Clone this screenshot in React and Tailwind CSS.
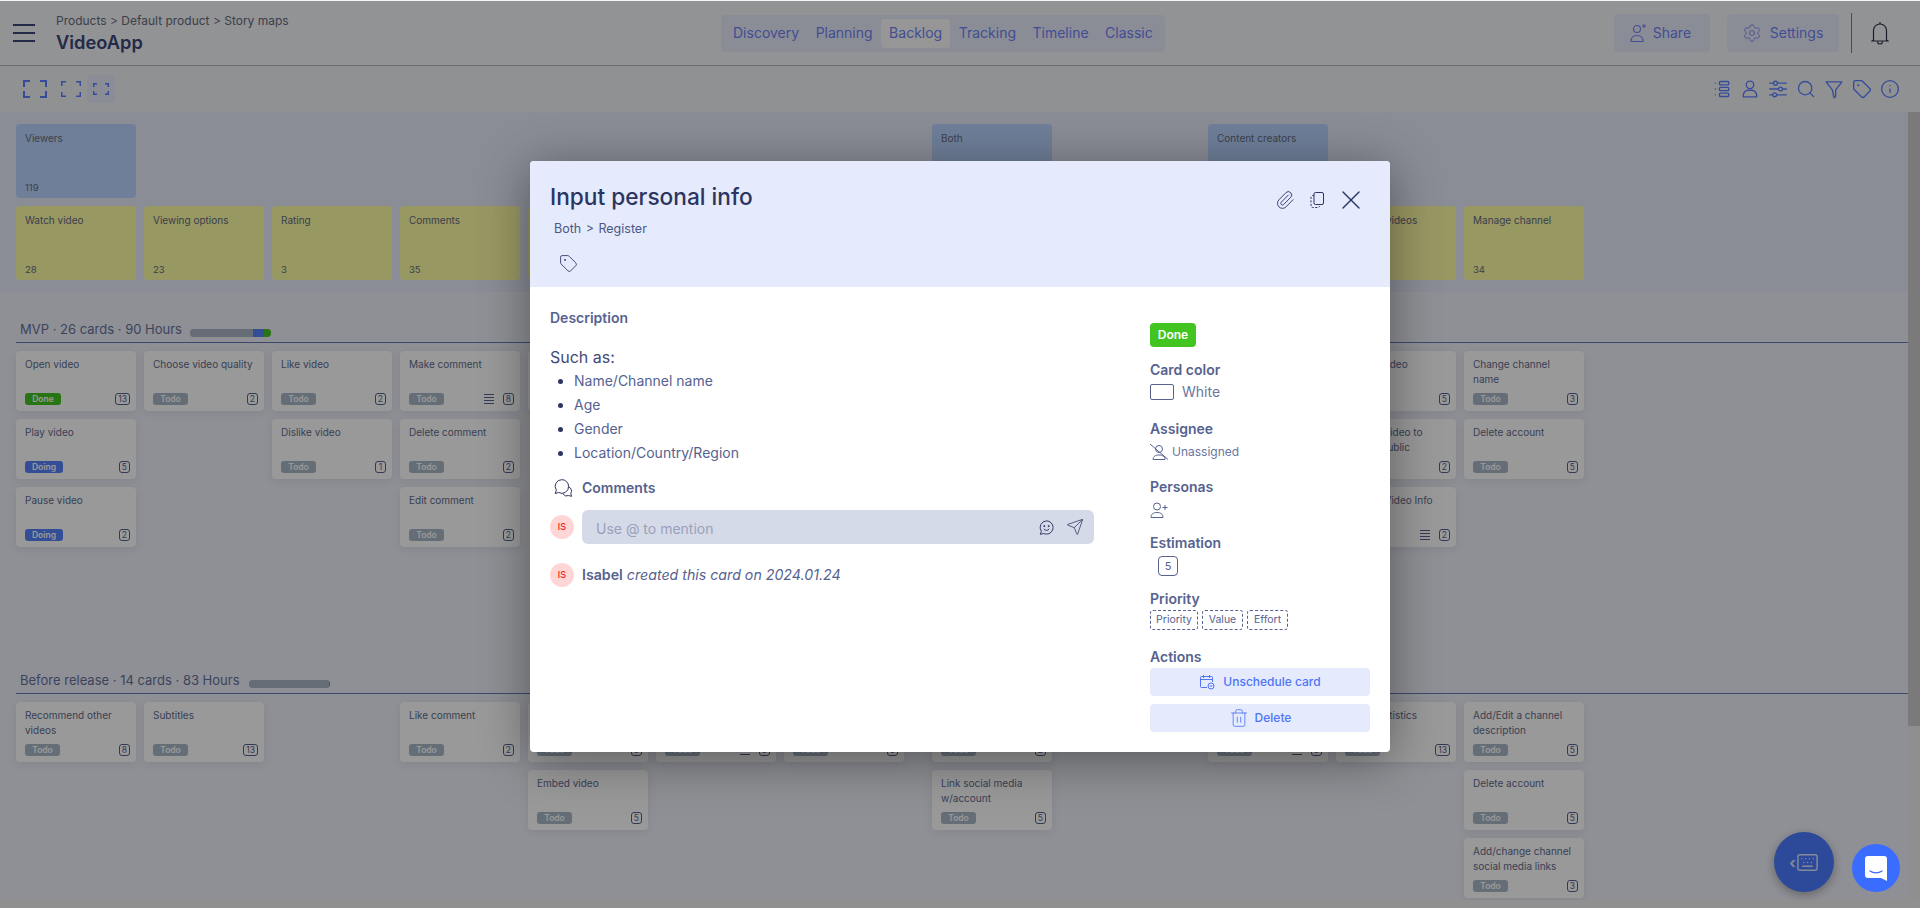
import { Info, Keyboard, Paperclip, Search, Send, Settings, Tag, Trash2, X } from 'lucide-react';

const mvp = [
  [
    [
      { t: 'Open video', s: 'Done', n: 13 },
      { t: 'Play video', s: 'Doing', n: 5 },
      { t: 'Pause video', s: 'Doing', n: 2 },
    ],
    [{ t: 'Choose video quality', s: 'Todo', n: 2 }],
    [
      { t: 'Like video', s: 'Todo', n: 2 },
      { t: 'Dislike video', s: 'Todo', n: 1 },
    ],
    [
      { t: 'Make comment', s: 'Todo', n: 8, lines: true },
      { t: 'Delete comment', s: 'Todo', n: 2 },
      { t: 'Edit comment', s: 'Todo', n: 2 },
    ],
    [{ t: 'Reply to comment', s: 'Todo', n: 3 }],
    [],
    [],
  ],
  [[{ t: 'Input personal info', s: 'Done', n: 5 }], []],
  [
    [],
    [
      { t: 'Upload video', s: 'Todo', n: 5 },
      { t: 'Change video to private/public', s: 'Todo', n: 2 },
      { t: 'Change Video Info', s: 'Todo', n: 2, lines: true },
    ],
    [
      { t: 'Change channel name', s: 'Todo', n: 3 },
      { t: 'Delete account', s: 'Todo', n: 5 },
    ],
  ],
];

const beforeRelease = [
  [
    [{ t: 'Recommend other videos', s: 'Todo', n: 8 }],
    [{ t: 'Subtitles', s: 'Todo', n: 13 }],
    [],
    [{ t: 'Like comment', s: 'Todo', n: 2 }],
    [
      { t: 'Share video', s: 'Todo', n: 3 },
      { t: 'Embed video', s: 'Todo', n: 5 },
    ],
    [{ t: 'Report video', s: 'Todo', n: 3, lines: true }],
    [{ t: 'Search videos', s: 'Todo', n: 5 }],
  ],
  [
    [
      { t: 'Edit profile', s: 'Todo', n: 2 },
      { t: 'Link social media w/account', s: 'Todo', n: 5 },
    ],
    [],
  ],
  [
    [{ t: 'Schedule video', s: 'Todo', n: 3, lines: true }],
    [{ t: 'Video statistics', s: 'Todo', n: 13 }],
    [
      { t: 'Add/Edit a channel description', s: 'Todo', n: 5 },
      { t: 'Delete account', s: 'Todo', n: 5 },
      { t: 'Add/change channel social media links', s: 'Todo', n: 3 },
    ],
  ],
];

const activities = [
  ['Watch video', 28],
  ['Viewing options', 23],
  ['Rating', 3],
  ['Comments', 35],
  ['Share', 6],
  ['Search', 9],
  ['Explore', 15],
  ['Register', 8],
  ['Profile', 4],
  ['Upload', 12],
  ['Manage videos', 21],
  ['Manage channel', 34],
];

const statusStyles = {
  Done: 'bg-[#42c421] w-9',
  Doing: 'bg-[#5683fb] w-[38px]',
  Todo: 'bg-[#a9b6c6] w-[35px]',
};

function Corners({ w, h, len, sw }) {
  return (
    <svg width={w} height={h} viewBox={`0 0 ${w} ${h}`} fill="none" stroke="#5a7fff" strokeWidth={sw}>
      <path d={`M${sw / 2} ${len}V${sw / 2}H${len}`} />
      <path d={`M${w - len} ${sw / 2}H${w - sw / 2}V${len}`} />
      <path d={`M${sw / 2} ${h - len}V${h - sw / 2}H${len}`} />
      <path d={`M${w - len} ${h - sw / 2}H${w - sw / 2}V${h - len}`} />
    </svg>
  );
}

function TabItem({ label, active }) {
  return (
    <div className={`flex h-[29px] items-center rounded px-2 text-sm ${active ? 'bg-[#fafafa]' : ''}`}>{label}</div>
  );
}

function BarIcon({ children }) {
  return (
    <svg width="20" height="20" viewBox="0 0 24 24" fill="none" stroke="#5a7fff" strokeWidth="1.6" strokeLinecap="round" strokeLinejoin="round">
      {children}
    </svg>
  );
}

function StoryCard({ card }) {
  return (
    <div className="flex h-[60px] w-[120px] flex-col justify-between rounded bg-white pl-[9px] pr-[6px] pt-[6px] pb-[6px] shadow-[0_2px_8px_rgba(90,100,140,0.12)]">
      <div className="text-[10px] leading-[15px] text-[#626b8c]">{card.t}</div>
      <div className="flex items-center justify-between">
        <span className={`flex h-3 items-center justify-center rounded-[3px] text-[8.5px] font-semibold text-white ${statusStyles[card.s]}`}>
          {card.s}
        </span>
        <div className="flex items-center gap-[9px]">
          {card.lines && (
            <div className="flex w-[10px] flex-col gap-[2px]">
              <div className="h-px bg-[#56628f]" />
              <div className="h-px bg-[#56628f]" />
              <div className="h-px bg-[#56628f]" />
              <div className="h-px bg-[#56628f]" />
            </div>
          )}
          <span className="flex h-3 min-w-[11px] items-center justify-center rounded-[3px] border border-[#56628f] px-[2px] text-[8.5px] text-[#56628f]">
            {card.n}
          </span>
        </div>
      </div>
    </div>
  );
}

function Lane({ groups }) {
  return (
    <div className="flex gap-7 pl-4 pt-2">
      {groups.map((group, g) => (
        <div key={g} className="flex gap-2">
          {group.map((col, c) => (
            <div key={c} className="flex w-[120px] flex-col gap-2">
              {col.map((card) => (
                <StoryCard key={card.t} card={card} />
              ))}
            </div>
          ))}
        </div>
      ))}
    </div>
  );
}

function BandCard({ title, count, color }) {
  return (
    <div className={`flex h-[74px] w-[120px] flex-col justify-between rounded pl-[9px] pt-[7px] pb-[3px] text-[#656a7e] ${color}`}>
      <div className="text-[10px] leading-[15px]">{title}</div>
      <div className="text-[9.5px] leading-[14px]">{count}</div>
    </div>
  );
}

function ReleaseHeader({ title, start, bar }) {
  return (
    <div className="ml-4 flex h-[51px] items-end border-b border-[#6478b8] pb-[3px]">
      <span className="ml-1 text-[13px] leading-[20px] text-[#66719c]">{title}</span>
      <div className={`mb-[2px] flex h-2 w-[81px] overflow-hidden rounded-full bg-[#aab6c6] ${start}`}>{bar}</div>
    </div>
  );
}

function Avatar() {
  return (
    <div className="flex h-6 w-6 shrink-0 items-center justify-center rounded-full bg-[#ffd6d6] text-[9px] font-medium text-[#f01d1d]">
      IS
    </div>
  );
}

function SideLabel({ className, children }) {
  return <div className={`text-sm font-semibold leading-5 text-[#56628f] ${className}`}>{children}</div>;
}

function ChanceChip({ label, width }) {
  return (
    <span className={`flex h-5 items-center justify-center rounded-[3px] border border-dashed border-[#56628f] text-[10.5px] text-[#56628f] ${width}`}>
      {label}
    </span>
  );
}

function Modal() {
  return (
    <div className="absolute left-[530px] top-[161px] flex h-[591px] w-[860px] flex-col overflow-hidden rounded bg-white shadow-[0_8px_50px_rgba(0,0,0,0.4)]">
      <div className="flex h-[126px] shrink-0 justify-between bg-[#e5eafd] pl-5 pr-[23px] pt-5">
        <div>
          <h2 className="text-[22.7px] font-medium leading-8 text-[#2b3560]">Input personal info</h2>
          <div className="ml-1 mt-[7px] text-[12.5px] leading-[18px] text-[#4c5884] [word-spacing:1px]">Both &gt; Register</div>
          <Tag size={19} strokeWidth={1.1} color="#2b3560" className="ml-[9px] mt-[16px]" />
        </div>
        <div className="flex h-[38px] items-center">
          <Paperclip size={20} strokeWidth={1.1} color="#2b3560" />
          <svg className="ml-[13px]" width="18" height="18" viewBox="0 0 18 18" fill="none" stroke="#2b3560" strokeWidth="1">
            <rect x="6" y="1.5" width="9.5" height="12" rx="1.5" />
            <path d="M6 4.5H4.5A1.5 1.5 0 0 0 3 6v9a1.5 1.5 0 0 0 1.5 1.5H10a1.5 1.5 0 0 0 1.5-1.5" strokeDasharray="2 1.5" />
          </svg>
          <X className="ml-[9px]" size={32} strokeWidth={1} color="#2b3560" />
        </div>
      </div>
      <div className="flex flex-1 pl-5">
        <div className="w-[544px] pt-[21px]">
          <div className="text-sm font-semibold leading-5 text-[#56628f]">Description</div>
          <div className="mt-[17px] text-base leading-6 text-[#3f4a75]">Such as:</div>
          <ul className="list-disc pl-6 text-sm leading-6 text-[#56628f] marker:text-[#2b3560]">
            <li>Name/Channel name</li>
            <li>Age</li>
            <li>Gender</li>
            <li>Location/Country/Region</li>
          </ul>
          <div className="mt-[13px] flex h-5 items-center">
            <svg className="ml-[3px]" width="20" height="20" viewBox="0 0 18 18" fill="none" stroke="#2b3560" strokeWidth=".9">
              <path d="M8 1.5a6 6 0 0 0-5 9.4L2 14l3-1a6 6 0 0 0 9-5.5 6 6 0 0 0-6-6z" />
              <path d="M14 8a4 4 0 0 1 2 6l.7 2.5L14 15.800a4 4 0 0 1-5-1.500" />
            </svg>
            <span className="ml-[9px] text-sm font-semibold text-[#56628f]">Comments</span>
          </div>
          <div className="mt-3 flex items-center gap-2">
            <Avatar />
            <div className="flex h-[34px] flex-1 items-center justify-between rounded-md bg-[#d5dae8] pl-[14px] pr-[10px]">
              <span className="pt-[3px] text-sm text-[#9aa1bb]">Use @ to mention</span>
              <div className="flex items-center gap-[11px]">
                <svg width="17" height="17" viewBox="0 0 18 18" fill="none" stroke="#2b3560" strokeWidth="1">
                  <path d="M9 2a7 7 0 0 1 0 14 7 7 0 0 1-3-.7L2.500 16.300l1-3.300A7 7 0 0 1 9 2z" />
                  <path d="M6 10.500c1.500 2 4.500 2 6 0" />
                  <circle cx="6.700" cy="7.500" r=".6" fill="#2b3560" />
                  <circle cx="11.300" cy="7.500" r=".6" fill="#2b3560" />
                </svg>
                <Send size={18} strokeWidth={1} color="#2b3560" />
              </div>
            </div>
          </div>
          <div className="mt-[19px] flex items-center gap-2 text-[14.2px] text-[#56628f]">
            <Avatar />
            <span>
              <b className="font-semibold">Isabel</b> <i>created this card on 2024.01.24</i>
            </span>
          </div>
        </div>
        <div className="ml-14 w-[220px] pt-9">
          <span className="flex h-6 w-[46px] items-center justify-center rounded bg-[#42c421] text-xs font-semibold text-white">Done</span>
          <SideLabel className="mt-[13px]">Card color</SideLabel>
          <div className="mt-1 flex h-4 items-center text-sm text-[#6a76a0]">
            <div className="h-4 w-6 rounded-[2px] border border-[#56628f]" />
            <span className="ml-2">White</span>
          </div>
          <SideLabel className="mt-[19px]">Assignee</SideLabel>
          <div className="mt-1 flex h-[18px] items-center text-xs text-[#6a76a0]">
            <svg width="18" height="16" viewBox="0 0 18 16" fill="none" stroke="#56628f" strokeWidth="1">
              <circle cx="9" cy="5" r="3.500" />
              <path d="M3 15.500c0-3 2.500-4.500 6-4.500s6 1.500 6 4.500z" />
              <path d="M0 0l18 15.500" />
            </svg>
            <span className="ml-1">Unassigned</span>
          </div>
          <SideLabel className="mt-4">Personas</SideLabel>
          <svg className="mt-[5px]" width="18" height="16" viewBox="0 0 18 16" fill="none" stroke="#56628f" strokeWidth="1">
            <circle cx="7" cy="4.500" r="3.500" />
            <path d="M1 15.500c0-3.500 2.500-5 6-5s6 1.500 6 5z" />
            <path d="M15 3v5M12.500 5.500h5" />
          </svg>
          <SideLabel className="mt-[15px]">Estimation</SideLabel>
          <div className="ml-2 mt-[3px] flex h-5 w-5 items-center justify-center rounded border border-[#56628f] text-[11px] text-[#56628f]">5</div>
          <SideLabel className="mt-[13px]">Priority</SideLabel>
          <div className="mt-px flex gap-1">
            <ChanceChip label="Priority" width="w-12" />
            <ChanceChip label="Value" width="w-[41px]" />
            <ChanceChip label="Effort" width="w-[41px]" />
          </div>
          <SideLabel className="mt-[17px]">Actions</SideLabel>
          <div className="mt-px flex h-7 items-center justify-center gap-2 rounded bg-[#e5eafd] text-xs font-medium text-[#4f75f5]">
            <svg width="16" height="16" viewBox="0 0 16 16" fill="none" stroke="#4f75f5" strokeWidth="1">
              <path d="M8 13.500H2.500a1 1 0 0 1-1-1v-9a1 1 0 0 1 1-1h10a1 1 0 0 1 1 1V8M1.500 5.500h12M4.500 1v3M10.500 1v3" />
              <circle cx="12" cy="12" r="3" />
              <path d="M10.500 12h3" />
            </svg>
            Unschedule card
          </div>
          <div className="mt-2 flex h-7 items-center justify-center gap-[6px] rounded bg-[#e5eafd] text-xs font-medium text-[#4f75f5]">
            <Trash2 size={20} strokeWidth={1} />
            <span>Delete</span>
          </div>
        </div>
      </div>
    </div>
  );
}

export default function App() {
  return (
    <div className="relative h-[908px] w-full overflow-hidden bg-[#f3f5f8] font-['Inter',sans-serif]">
      <header className="flex h-[66px] items-center border-b border-[#b5b8be] bg-[#f3f5f8] pt-px">
        <div className="ml-[13px] flex w-[22px] flex-col gap-[6px]">
          <div className="h-[2px] bg-[#3a4778]" />
          <div className="h-[2px] bg-[#3a4778]" />
          <div className="h-[2px] bg-[#3a4778]" />
        </div>
        <div className="ml-[21px] w-[665px]">
          <div className="text-[12px] leading-4 text-[#666a7c]">Products &gt; Default product &gt; Story maps</div>
          <div className="mt-px text-[18.25px] font-semibold leading-6 text-[#3a4778]">VideoApp</div>
        </div>
        <nav className="flex h-[37px] items-center gap-[0.5px] rounded bg-[#e8ebfb] px-1 text-[#6f82f5]">
          <TabItem label="Discovery" />
          <TabItem label="Planning" />
          <TabItem label="Backlog" active />
          <TabItem label="Tracking" />
          <TabItem label="Timeline" />
          <TabItem label="Classic" />
        </nav>
        <div className="ml-[449px] flex h-[38px] w-24 items-center gap-[6px] rounded bg-[#e8ebfb] pl-[15px] text-sm text-[#6f82f5]">
          <svg width="18" height="20" viewBox="0 0 18 20" fill="none" stroke="#6f82f5" strokeWidth="1.100">
            <circle cx="8" cy="6" r="3.500" />
            <path d="M2 18.500c0-4 2.500-6 6-6s6 2 6 6z" />
            <path d="M15 1v4M13 3h4" />
          </svg>
          Share
        </div>
        <div className="ml-[17px] flex h-[38px] w-[112px] items-center gap-2 rounded bg-[#e8ebfb] pl-[15px] text-sm text-[#6f82f5]">
          <Settings size={20} strokeWidth={1} />
          Settings
        </div>
        <div className="ml-3 h-10 w-px bg-[#7b7e85]" />
        <svg className="ml-[19px]" width="18" height="24" viewBox="0 0 18 24" fill="none" stroke="#2f3547" strokeWidth="1.200">
          <path d="M9 3a6.500 6.500 0 0 0-6.500 6.500V19l-1.500 1h16l-1.500-1V9.500A6.500 6.500 0 0 0 9 3z" />
          <path d="M9 3V1M6.500 20.500a2.500 2.500 0 0 0 5 0" />
        </svg>
      </header>

      <div className="flex h-[46px] items-center justify-between bg-[#f1f2f5] pl-[23px] pr-5">
        <div className="flex items-center">
          <Corners w={24} h={18} len={7} sw={2} />
          <div className="ml-[14px]">
            <Corners w={20} h={16} len={5} sw={1.500} />
          </div>
          <div className="ml-[6px] flex h-7 w-7 items-center justify-center rounded bg-[#e8ebfb]">
            <Corners w={16} h={12} len={4} sw={1.500} />
          </div>
        </div>
        <div className="flex items-center gap-2">
          <BarIcon>
            <path d="M4 5h.01M4 12h.01M4 19h.01" />
            <rect x="9" y="3" width="11" height="4" rx="1" />
            <rect x="9" y="10" width="11" height="4" rx="1" />
            <rect x="9" y="17" width="11" height="4" rx="1" />
          </BarIcon>
          <BarIcon>
            <circle cx="12" cy="7" r="4.500" />
            <path d="M4 21.500v-2a6 6 0 0 1 6-6h4a6 6 0 0 1 6 6v2z" />
          </BarIcon>
          <BarIcon>
            <path d="M2 5h20M2 12h20M2 19h20" />
            <circle cx="9" cy="5" r="2.300" fill="#f1f2f5" />
            <circle cx="15" cy="12" r="2.300" fill="#f1f2f5" />
            <circle cx="8" cy="19" r="2.300" fill="#f1f2f5" />
          </BarIcon>
          <Search size={20} strokeWidth={1.6} color="#5a7fff" />
          <BarIcon>
            <path d="M2.500 3.500h19L14 13v8l-2 1.500-2-9.500z" />
          </BarIcon>
          <Tag size={20} strokeWidth={1.6} color="#5a7fff" />
          <Info size={20} strokeWidth={1.6} color="#5a7fff" />
        </div>
      </div>

      <div className="flex h-[788px]">
        <main className="h-full flex-1 overflow-hidden bg-[#eef0f8]">
          <section className="flex h-[180px] flex-col gap-2 bg-[#e7eafa] pl-4 pt-3">
            <div className="flex gap-7">
              <div className="w-[888px]">
                <BandCard title="Viewers" count="119" color="bg-[#b9d4ff]" />
              </div>
              <div className="w-[248px]">
                <BandCard title="Both" count="41" color="bg-[#b9d4ff]" />
              </div>
              <BandCard title="Content creators" count="67" color="bg-[#b9d4ff]" />
            </div>
            <div className="flex">
              {activities.map(([title, count], i) => (
                <div key={title} className={i === 7 || i === 9 ? 'ml-7' : i === 0 ? '' : 'ml-2'}>
                  <BandCard title={title} count={count} color="bg-[#fdfda6]" />
                </div>
              ))}
            </div>
          </section>

          <ReleaseHeader
            title="MVP · 26 cards · 90 Hours"
            start="ml-2"
            bar={
              <>
                <div className="w-[63px] bg-[#aab6c6]" />
                <div className="w-[11px] bg-[#5683fb]" />
                <div className="w-[7px] bg-[#42c421]" />
              </>
            }
          />
          <div className="h-[300px]">
            <Lane groups={mvp} />
          </div>

          <ReleaseHeader
            title="Before release · 14 cards · 83 Hours"
            start="ml-[9px]"
            bar={
              <>
                <div className="w-[80px] bg-[#aab6c6]" />
                <div className="w-px bg-[#5683fb]" />
              </>
            }
          />
          <Lane groups={beforeRelease} />
        </main>
        <div className="h-full w-3 bg-[#efefef]">
          <div className="h-[614px] bg-[#cbcbcb]" />
        </div>
      </div>
      <div className="h-2 bg-[#f1f1f1]" />

      <div className="absolute left-[1774px] top-[832px] flex h-[60px] w-[60px] items-center justify-center rounded-full bg-[#4b7bff] text-[#dde6ff] shadow-[0_3px_10px_rgba(0,0,0,0.3)]">
        <span className="text-[15px] font-bold leading-none">‹</span>
        <Keyboard size={23} strokeWidth={1.5} />
      </div>

      <div className="absolute inset-x-0 bottom-0 top-px bg-black/40" />

      <Modal />

      <div className="absolute left-[1852px] top-[844px] flex h-12 w-12 items-center justify-center rounded-full bg-[#3a6cff]">
        <svg width="22" height="25" viewBox="0 0 22 25" fill="none">
          <path d="M3 0h16a3 3 0 0 1 3 3v22l-6-3H3a3 3 0 0 1-3-3V3a3 3 0 0 1 3-3z" fill="white" />
          <path d="M5 15c3.500 2.500 8.500 2.500 12 0" stroke="#3a6cff" strokeWidth="1.300" strokeLinecap="round" />
        </svg>
      </div>
    </div>
  );
}
